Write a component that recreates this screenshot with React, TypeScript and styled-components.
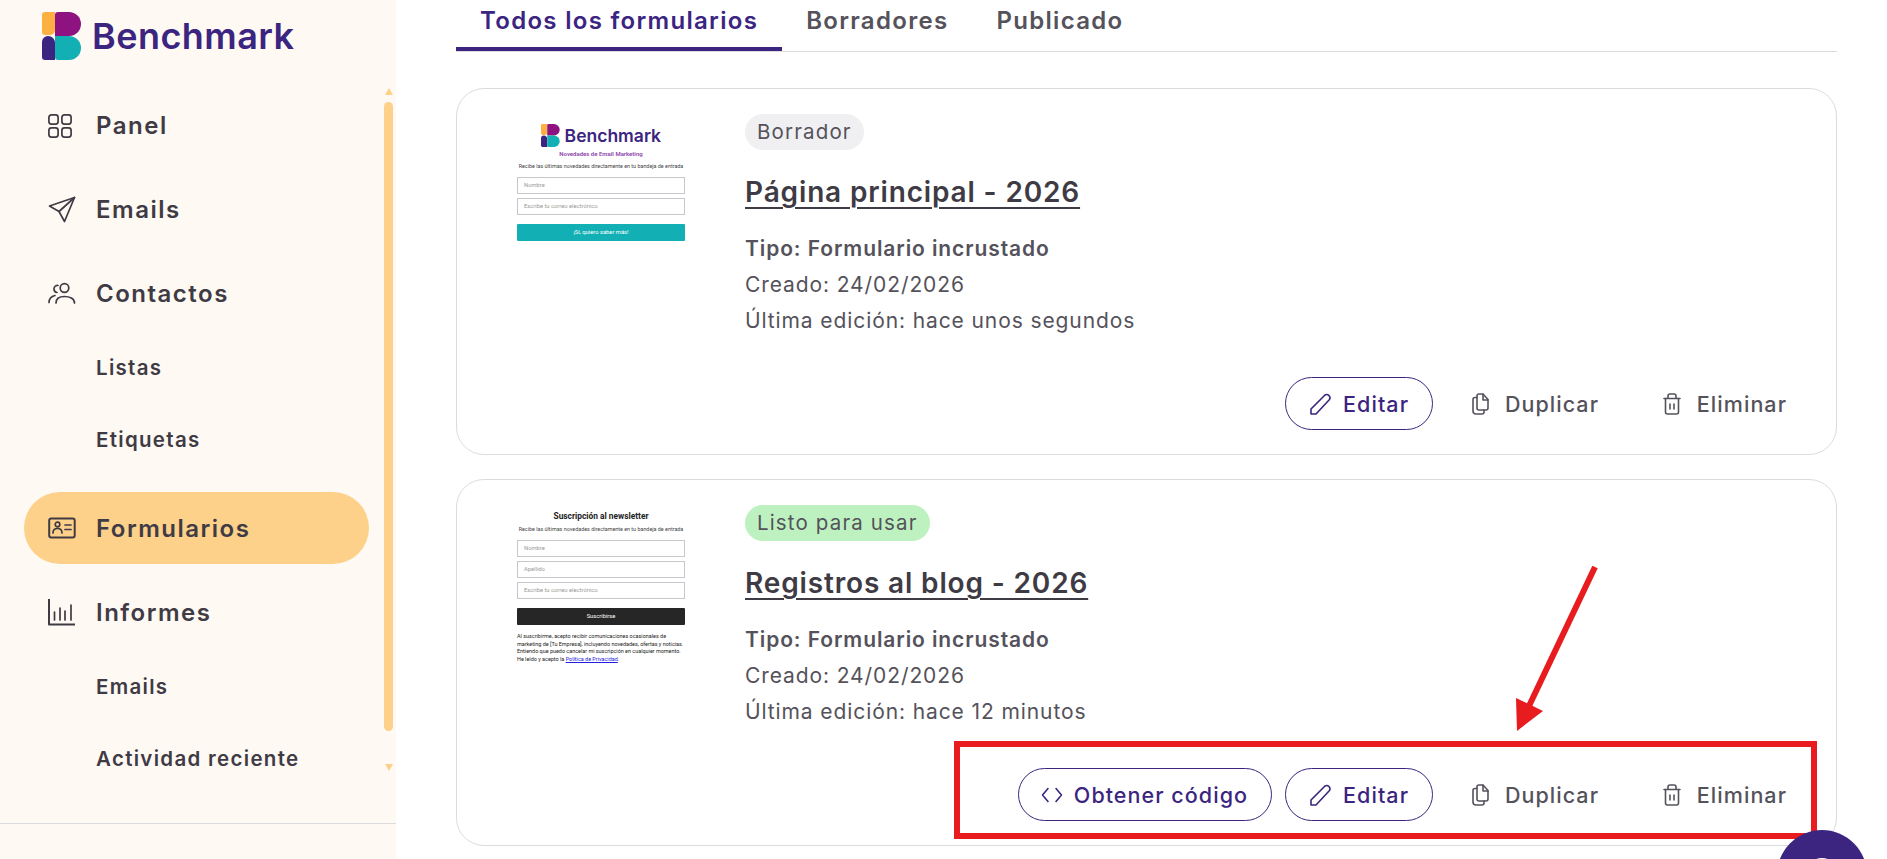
import React from 'react';
import styled, { createGlobalStyle } from 'styled-components';

const palette = {
  cream: '#fff9f3',
  amber: '#fdd189',
  ink: '#3f3b45',
  grey: '#55525b',
  indigo: '#3b2580',
  line: '#dcdcdc',
  red: '#e81c1f',
};

const GlobalStyle = createGlobalStyle`
  html, body {
    margin: 0;
    height: 100%;
    overflow: hidden;
    background: #fff;
    font-family: Inter, "Liberation Sans", sans-serif;
  }
`;

const Page = styled.div`
  position: relative;
  display: flex;
  width: 1887px;
  height: 859px;
  overflow: hidden;
`;

const Sidebar = styled.aside`
  width: 396px;
  flex: none;
  background: ${palette.cream};
  display: flex;
  flex-direction: column;
`;

const LogoRow = styled.div`
  display: flex;
  align-items: center;
  gap: 11px;
  height: 72px;
  padding-left: 42px;
`;

const LogoText = styled.span`
  font-size: 36px;
  font-weight: 600;
  letter-spacing: 0.45px;
  color: ${palette.indigo};
`;

const NavArea = styled.div`
  display: flex;
  height: 751px;
  border-bottom: 1px solid ${palette.line};
`;

const NavList = styled.nav`
  flex: 1;
  display: flex;
  flex-direction: column;
  padding: 17px 0 0 24px;
`;

const NavItem = styled.div<{ $active?: boolean }>`
  display: flex;
  align-items: center;
  gap: 20px;
  width: 345px;
  height: 72px;
  margin-bottom: 12px;
  padding-left: 24px;
  box-sizing: border-box;
  border-radius: 36px;
  background: ${(p) => (p.$active ? palette.amber : 'transparent')};
  color: ${palette.ink};
  font-size: 24px;
  font-weight: 600;
  letter-spacing: 1.5px;
`;

const SubList = styled.div`
  display: flex;
  flex-direction: column;
  gap: 18px;
  margin-bottom: 25px;
  padding-left: 72px;
`;

const SubItem = styled.div`
  height: 54px;
  line-height: 54px;
  color: ${palette.ink};
  font-size: 20.5px;
  font-weight: 600;
  letter-spacing: 1.3px;
`;

const NavIcon = styled.svg`
  width: 28px;
  height: 28px;
  flex: none;
  fill: none;
  stroke: currentColor;
  stroke-width: 1.7;
  stroke-linecap: round;
  stroke-linejoin: round;
`;

const ScrollTrack = styled.div`
  width: 9px;
  margin-right: 3px;
  padding-top: 16px;
  display: flex;
  flex-direction: column;
  align-items: center;
`;

const ScrollUp = styled.div`
  width: 0;
  height: 0;
  border-left: 4.5px solid transparent;
  border-right: 4.5px solid transparent;
  border-bottom: 7px solid ${palette.amber};
`;

const ScrollDown = styled.div`
  width: 0;
  height: 0;
  margin-top: 33px;
  border-left: 4.5px solid transparent;
  border-right: 4.5px solid transparent;
  border-top: 7px solid ${palette.amber};
`;

const ScrollThumb = styled.div`
  width: 9px;
  height: 629px;
  margin-top: 7px;
  border-radius: 5px;
  background: ${palette.amber};
`;

const Main = styled.main`
  flex: 1;
  padding: 0 50px 0 60px;
`;

const Tabs = styled.div`
  display: flex;
  height: 51px;
  border-bottom: 1px solid ${palette.line};
`;

const Tab = styled.div<{ $active?: boolean }>`
  height: 51px;
  box-sizing: border-box;
  padding: 6px 24px 0;
  line-height: 30px;
  font-size: 24px;
  font-weight: 600;
  letter-spacing: 1.3px;
  color: ${(p) => (p.$active ? palette.indigo : palette.grey)};
  border-bottom: 4px solid ${(p) => (p.$active ? palette.indigo : 'transparent')};
`;

const Card = styled.section`
  height: 367px;
  margin-top: 24px;
  box-sizing: border-box;
  border: 1px solid ${palette.line};
  border-radius: 28px;
  padding: 0 49px 0 60px;
  display: flex;
  gap: 60px;
  &:first-of-type {
    margin-top: 36px;
  }
`;

const Thumb = styled.div`
  width: 168px;
  flex: none;
  display: flex;
  flex-direction: column;
  align-items: center;
  font-family: Roboto, sans-serif;
  color: #444;
`;

const ThumbLogo = styled.div`
  display: flex;
  align-items: center;
  gap: 5px;
  height: 24px;
  margin-top: 34px;
  font-family: Inter, sans-serif;
  font-size: 17.5px;
  font-weight: 600;
  color: ${palette.indigo};
`;

const ThumbAccent = styled.div`
  margin-top: 2px;
  font-size: 6px;
  line-height: 10px;
  font-weight: 600;
  color: #8e44ad;
`;

const ThumbTitle = styled.div`
  margin-top: 30px;
  font-size: 8.4px;
  line-height: 12px;
  font-weight: 700;
  color: #222;
`;

const ThumbLead = styled.div<{ $gap: number }>`
  margin-top: ${(p) => p.$gap}px;
  font-size: 5.4px;
  line-height: 8px;
  white-space: nowrap;
`;

const ThumbFields = styled.div`
  width: 100%;
  margin-top: 3px;
`;

const ThumbInput = styled.div`
  width: 100%;
  height: 17px;
  margin-top: 4px;
  padding-left: 6px;
  box-sizing: border-box;
  border: 1px solid #c8c8cc;
  font-size: 5.8px;
  line-height: 15px;
  color: #999;
`;

const ThumbButton = styled.div<{ $bg: string }>`
  width: 100%;
  height: 17px;
  margin-top: 9px;
  background: ${(p) => p.$bg};
  border-radius: 1px;
  text-align: center;
  font-size: 5.8px;
  line-height: 17px;
  color: #fff;
`;

const ThumbLegal = styled.div`
  margin-top: 8px;
  width: 100%;
  font-size: 5.45px;
  line-height: 7.6px;
  color: #222;
  a {
    color: #2222dd;
  }
`;

const CardBody = styled.div`
  flex: 1;
  display: flex;
  flex-direction: column;
`;

const Badge = styled.span<{ $ready?: boolean }>`
  align-self: flex-start;
  height: 36px;
  margin-top: 25px;
  padding: 0 12px;
  border-radius: 18px;
  background: ${(p) => (p.$ready ? '#bdf2c0' : '#f0f0f2')};
  color: ${palette.grey};
  font-size: 20.5px;
  line-height: 36px;
  letter-spacing: 1.15px;
`;

const Title = styled.h2`
  margin: 22px 0 0;
  font-size: 28px;
  line-height: 40px;
  font-weight: 600;
  letter-spacing: 0.85px;
  color: ${palette.ink};
  text-decoration: underline;
  text-underline-offset: 5px;
  text-decoration-thickness: 2px;
`;

const MetaList = styled.div`
  margin-top: 19px;
`;

const Meta = styled.div<{ $bold?: boolean }>`
  font-size: 21px;
  line-height: 36px;
  font-weight: ${(p) => (p.$bold ? 600 : 400)};
  letter-spacing: 0.9px;
  color: ${palette.grey};
`;

const Actions = styled.div`
  display: flex;
  align-items: center;
  justify-content: flex-end;
  margin-top: auto;
  margin-bottom: 24px;
`;

const OutlineButton = styled.div`
  display: flex;
  align-items: center;
  justify-content: center;
  gap: 11px;
  height: 53px;
  padding: 0 23px 0 22px;
  margin-left: 13px;
  box-sizing: border-box;
  border: 1px solid ${palette.indigo};
  border-radius: 27px;
  color: ${palette.indigo};
  font-size: 21.5px;
  font-weight: 500;
  letter-spacing: 1.05px;
`;

const PlainButton = styled.div<{ $width: number }>`
  display: flex;
  align-items: center;
  gap: 16px;
  width: ${(p) => p.$width}px;
  justify-content: flex-end;
  color: ${palette.grey};
  font-size: 21.5px;
  font-weight: 500;
  letter-spacing: 1.05px;
`;

const Annotation = styled.div`
  position: absolute;
  left: 954px;
  top: 741px;
  width: 863px;
  height: 98px;
  box-sizing: border-box;
  border: 6px solid ${palette.red};
`;

const Arrow = styled.svg`
  position: absolute;
  left: 1500px;
  top: 560px;
  width: 110px;
  height: 180px;
`;

const ChatBubble = styled.div`
  position: absolute;
  left: 1777px;
  top: 830px;
  width: 90px;
  height: 90px;
  border-radius: 50%;
  background: ${palette.indigo};
`;

const ChatGlyph = styled.div`
  position: absolute;
  left: 28px;
  top: 28px;
  width: 34px;
  height: 34px;
  border-radius: 50%;
  background: #fff;
`;

const LogoMark = ({ size = 48 }: { size?: number }) => (
  <svg width={(size * 39) / 48} height={size} viewBox="0 0 39 48">
    <path d="M3 0h10v18a5 5 0 0 1-5 5H3a3 3 0 0 1-3-3V3a3 3 0 0 1 3-3z" fill="#fdb042" />
    <path d="M13 3a3 3 0 0 1 3-3h11a12 12 0 0 1 0 24H13z" fill="#8e1280" />
    <path d="M6 24c4 0 7 3 7 7v17H3a3 3 0 0 1-3-3V30a6 6 0 0 1 6-6z" fill="#3b2580" />
    <path d="M13 24h14a12 12 0 0 1 0 24H16a3 3 0 0 1-3-3z" fill="#12b0b5" />
  </svg>
);

const PanelIcon = () => (
  <NavIcon viewBox="0 0 28 28">
    <rect x="0.9" y="3.900" width="9.200" height="9.200" rx="2.500" />
    <rect x="13.900" y="3.900" width="9.200" height="9.200" rx="2.500" />
    <rect x="0.9" y="16.900" width="9.200" height="9.200" rx="2.500" />
    <rect x="13.900" y="16.900" width="9.200" height="9.200" rx="2.500" />
  </NavIcon>
);

const SendIcon = () => (
  <NavIcon viewBox="0 0 28 28">
    <path d="M26.500 2.500 1.500 11l9.500 5.500 5.500 10z" />
    <path d="M26.500 2.500 11 16.500" />
  </NavIcon>
);

const ContactsIcon = () => (
  <NavIcon viewBox="0 0 28 28">
    <circle cx="16.500" cy="9" r="4.300" />
    <path d="M8 24c0-4.500 3.500-6.500 8.500-6.500s10 2 10 6.500" />
    <path d="M10 6.500a3.500 3.500 0 0 0-1 7M1 23.500c0-3.500 2-6 6-7" />
  </NavIcon>
);

const FormIcon = () => (
  <NavIcon viewBox="0 0 28 28">
    <rect x="1.200" y="4.500" width="25.500" height="19" rx="2" strokeWidth="2" />
    <circle cx="9.500" cy="10.500" r="2.300" />
    <path d="M5 19c0-3 2-4.500 4.500-4.500s4.500 1.500 4.500 4.500" />
    <path d="M17 11h6M17 15.500h6" />
  </NavIcon>
);

const ChartIcon = () => (
  <NavIcon viewBox="0 0 28 28">
    <path d="M1 1v25.500h26" strokeWidth="2" strokeLinecap="butt" />
    <path d="M6.500 14v8M12 10v12M17 13v9M23 7v15" />
  </NavIcon>
);

const ActionIcon = styled.svg`
  flex: none;
  fill: none;
  stroke: currentColor;
  stroke-width: 1.6;
  stroke-linecap: round;
  stroke-linejoin: round;
`;

const CodeIcon = () => (
  <ActionIcon width="22" height="24" viewBox="0 0 22 24">
    <path d="M7 5.500 1.500 12 7 18.500M15 5.500l5.500 6.500-5.500 6.500" />
  </ActionIcon>
);

const PencilIcon = () => (
  <ActionIcon width="24" height="24" viewBox="0 0 24 24">
    <path d="M3 22v-5L17 3a3.300 3.300 0 0 1 4.500 4.500L8 22z" />
  </ActionIcon>
);

const CopyIcon = () => (
  <ActionIcon width="17" height="22" viewBox="0 0 17 22">
    <path d="M5 3c0-1.200.8-2 2-2h4l5 5.500V15c0 1.200-.8 2-2 2H7c-1.200 0-2-.8-2-2z" />
    <path d="M11 1.200V7h5" />
    <path d="M5 4.500H3c-1.200 0-2 .8-2 2V18c0 1.800 1.200 3 3 3h6c1.200 0 2-.8 2-2v-2" />
  </ActionIcon>
);

const TrashIcon = () => (
  <ActionIcon width="18" height="22" viewBox="0 0 18 22">
    <path d="M1 5.500h16M5 5.500V3c0-1.200.8-2 2-2h4c1.200 0 2 .8 2 2v2.500" />
    <path d="M2.500 5.500V19c0 1.200.8 2 2 2h9c1.200 0 2-.8 2-2V5.500" />
    <path d="M7 11v5M11 11v5" />
  </ActionIcon>
);

const CardActions = ({ code }: { code?: boolean }) => (
  <Actions>
    {code && (
      <OutlineButton>
        <CodeIcon />
        Obtener código
      </OutlineButton>
    )}
    <OutlineButton>
      <PencilIcon />
      Editar
    </OutlineButton>
    <PlainButton $width={166}>
      <CopyIcon />
      Duplicar
    </PlainButton>
    <PlainButton $width={188}>
      <TrashIcon />
      Eliminar
    </PlainButton>
  </Actions>
);

const App = () => (
  <>
    <GlobalStyle />
    <Page>
      <Sidebar>
        <LogoRow>
          <LogoMark />
          <LogoText>Benchmark</LogoText>
        </LogoRow>
        <NavArea>
          <NavList>
            <NavItem><PanelIcon />Panel</NavItem>
            <NavItem><SendIcon />Emails</NavItem>
            <NavItem><ContactsIcon />Contactos</NavItem>
            <SubList>
              <SubItem>Listas</SubItem>
              <SubItem>Etiquetas</SubItem>
            </SubList>
            <NavItem $active><FormIcon />Formularios</NavItem>
            <NavItem><ChartIcon />Informes</NavItem>
            <SubList>
              <SubItem>Emails</SubItem>
              <SubItem>Actividad reciente</SubItem>
            </SubList>
          </NavList>
          <ScrollTrack>
            <ScrollUp />
            <ScrollThumb />
            <ScrollDown />
          </ScrollTrack>
        </NavArea>
      </Sidebar>
      <Main>
        <Tabs>
          <Tab $active>Todos los formularios</Tab>
          <Tab>Borradores</Tab>
          <Tab>Publicado</Tab>
        </Tabs>
        <Card>
          <Thumb>
            <ThumbLogo>
              <LogoMark size={23} />
              Benchmark
            </ThumbLogo>
            <ThumbAccent>Novedades de Email Marketing</ThumbAccent>
            <ThumbLead $gap={3}>Recibe las últimas novedades directamente en tu bandeja de entrada</ThumbLead>
            <ThumbFields>
              <ThumbInput>Nombre</ThumbInput>
              <ThumbInput>Escribe tu correo electrónico</ThumbInput>
            </ThumbFields>
            <ThumbButton $bg="#12b0b5">¡Sí, quiero saber más!</ThumbButton>
          </Thumb>
          <CardBody>
            <Badge>Borrador</Badge>
            <Title>Página principal - 2026</Title>
            <MetaList>
              <Meta $bold>Tipo: Formulario incrustado</Meta>
              <Meta>Creado: 24/02/2026</Meta>
              <Meta>Última edición: hace unos segundos</Meta>
            </MetaList>
            <CardActions />
          </CardBody>
        </Card>
        <Card>
          <Thumb>
            <ThumbTitle>Suscripción al newsletter</ThumbTitle>
            <ThumbLead $gap={3}>Recibe las últimas novedades directamente en tu bandeja de entrada</ThumbLead>
            <ThumbFields>
              <ThumbInput>Nombre</ThumbInput>
              <ThumbInput>Apellido</ThumbInput>
              <ThumbInput>Escribe tu correo electrónico</ThumbInput>
            </ThumbFields>
            <ThumbButton $bg="#262626">Suscribirse</ThumbButton>
            <ThumbLegal>
              Al suscribirme, acepto recibir comunicaciones ocasionales de marketing de [Tu Empresa], incluyendo novedades, ofertas y noticias. Entiendo que puedo cancelar mi suscripción en cualquier momento. He leído y acepto la <a href="#politica">Política de Privacidad</a>.
            </ThumbLegal>
          </Thumb>
          <CardBody>
            <Badge $ready>Listo para usar</Badge>
            <Title>Registros al blog - 2026</Title>
            <MetaList>
              <Meta $bold>Tipo: Formulario incrustado</Meta>
              <Meta>Creado: 24/02/2026</Meta>
              <Meta>Última edición: hace 12 minutos</Meta>
            </MetaList>
            <CardActions code />
          </CardBody>
        </Card>
      </Main>
      <Annotation />
      <Arrow viewBox="0 0 110 180">
        <path d="M95 7 29 146" stroke={palette.red} strokeWidth="6" fill="none" />
        <path d="M17 171 16 138 43 151z" fill={palette.red} />
      </Arrow>
      <ChatBubble>
        <ChatGlyph />
      </ChatBubble>
    </Page>
  </>
);

export default App;
